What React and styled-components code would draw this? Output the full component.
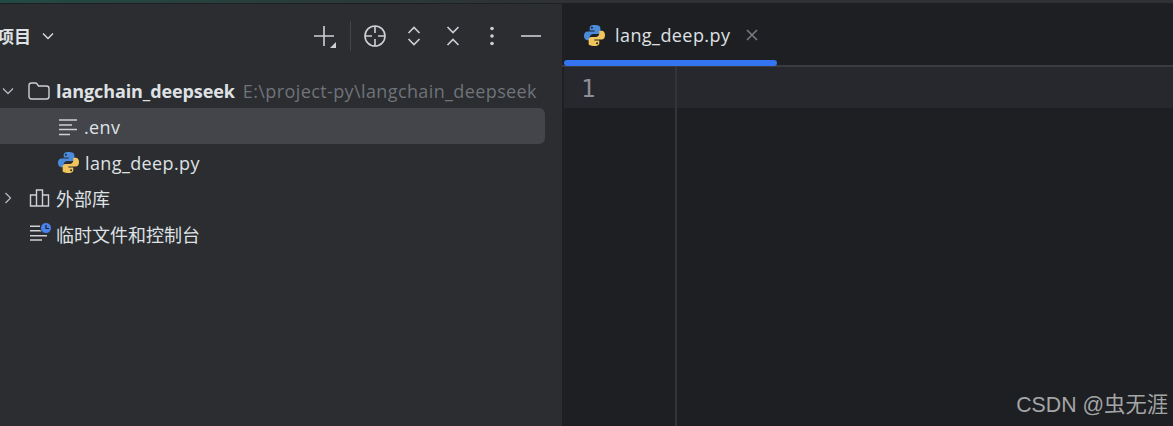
import React from 'react';
import styled, { createGlobalStyle } from 'styled-components';

const GlobalStyle = createGlobalStyle`
  html, body {
    margin: 0;
    padding: 0;
    background: #1e1f22;
  }
  body {
    font-family: 'Open Sans', 'Noto Sans CJK SC', sans-serif;
    overflow: hidden;
  }
`;

const Frame = styled.div`
  width: 1173px;
  height: 426px;
  display: flex;
  flex-direction: column;
  overflow: hidden;
`;

const TopStrip = styled.div`
  height: 3px;
  flex: none;
  background: linear-gradient(90deg, #234a44 0, #2a3a38 340px, #2f3134 560px);
  border-bottom: 1px solid #1e1f22;
`;

const Body = styled.div`
  flex: 1;
  display: flex;
  min-height: 0;
`;

const Sidebar = styled.aside`
  width: 562px;
  flex: none;
  background: #2b2d30;
  display: flex;
  flex-direction: column;
`;

const SideHeader = styled.header`
  height: 63px;
  flex: none;
  display: flex;
  align-items: center;
  padding: 0 12px 0 0;
`;

const Title = styled.div`
  display: flex;
  align-items: center;
  gap: 9px;
  margin-left: -3px;
  font-size: 17px;
  font-weight: 600;
  color: #dfe1e5;
`;

const Tools = styled.div`
  margin-left: auto;
  display: flex;
  align-items: center;
`;

const ToolButton = styled.button`
  width: ${p => p.$w || 39}px;
  height: 32px;
  padding: 0;
  background: none;
  border: 0;
  display: flex;
  align-items: center;
  justify-content: center;
  color: #ced0d6;
`;

const ToolDivider = styled.span`
  width: 1px;
  height: 30px;
  margin: 0 4px 0 8px;
  background: #43454a;
`;

const Tree = styled.div`
  display: flex;
  flex-direction: column;
  padding: 5px 17px 0 0;
`;

const Row = styled.div`
  height: 36px;
  box-sizing: border-box;
  display: flex;
  align-items: center;
  padding-left: ${p => p.$indent}px;
  padding-top: ${p => (p.$latin ? 1 : 0)}px;
  border-radius: ${p => (p.$selected ? '0 6px 6px 0' : '0')};
  background: ${p => (p.$selected ? '#43454a' : 'transparent')};
  font-size: 18px;
  letter-spacing: ${p => (p.$latin ? '0.39px' : '0')};
  color: #dfe1e5;
  white-space: nowrap;
`;

const Arrow = styled.span`
  width: 28px;
  flex: none;
  display: flex;
  align-items: center;
  color: #b4b8bf;
`;

const RowIcon = styled.span`
  width: ${p => p.$w || 27}px;
  flex: none;
  display: flex;
  align-items: center;
`;

const ProjectName = styled.span`
  font-weight: 700;
  letter-spacing: -0.09px;
`;

const ProjectPath = styled.span`
  margin-left: 8px;
  color: #6f737a;
`;

const Editor = styled.main`
  position: relative;
  flex: 1;
  min-width: 0;
  background: #1e1f22;
  display: flex;
  flex-direction: column;
`;

const TabBar = styled.div`
  height: 61px;
  flex: none;
  display: flex;
  align-items: flex-start;
  border-bottom: 2px solid #393b40;
`;

const Tab = styled.div`
  position: relative;
  width: 213px;
  height: 61px;
  margin-left: 2px;
  display: flex;
  align-items: center;
  padding: 1px 0 0 19px;
  box-sizing: border-box;
  font-size: 18px;
  letter-spacing: 0.43px;
  color: #dfe1e5;

  &::after {
    content: '';
    position: absolute;
    left: 0;
    right: 0;
    bottom: -1px;
    height: 6px;
    border-radius: 3px;
    background: #3574f0;
  }
`;

const TabLabel = styled.span`
  margin: 0 15px 0 9px;
`;

const CodeArea = styled.div`
  flex: 1;
  display: flex;
  min-height: 0;
`;

const Gutter = styled.div`
  width: 111px;
  flex: none;
  padding-left: 2px;
  border-right: 2px solid #313438;
`;

const LineNumber = styled.div`
  height: 41px;
  box-sizing: border-box;
  display: flex;
  align-items: center;
  padding: 3px 0 0 17px;
  background: #26282e;
  font-family: 'DejaVu Sans Mono', 'Liberation Mono', monospace;
  font-size: 24px;
  color: #8c8f96;
`;

const CurrentLine = styled.div`
  flex: 1;
  height: 41px;
  background: #26282e;
`;

const Watermark = styled.div`
  position: absolute;
  right: 5px;
  bottom: 8px;
  font-family: 'Liberation Sans', 'Noto Sans CJK SC', sans-serif;
  font-size: 21.3px;
  color: #a3a5a7;
`;

function PythonIcon({ size = 23 }) {
  return (
    <svg width={size} height={size} viewBox="0 0 24 24">
      <path
        fill="#4b8bdc"
        d="M11.900 1C7.600 1 7 2.800 7 4.100V6.800h5.200v1H4.600C2.600 7.800 1 9.600 1 12.300c0 2.800 1.500 4.600 3.400 4.600H7v-2.800c0-2 1.700-3.600 3.700-3.600h4.700c1.500 0 2.700-1.300 2.700-2.800V4.100C18.100 2.300 16.300 1 11.900 1zM9.300 2.800a1 1 0 1 1 0 2.100 1 1 0 0 1 0-2.100z"
      />
      <path
        fill="#f2c55c"
        d="M12.100 23c4.300 0 4.900-1.800 4.900-3.100v-2.700h-5.200v-1h7.600c2 0 3.600-1.800 3.600-4.500 0-2.800-1.500-4.600-3.400-4.600H17v2.800c0 2-1.700 3.600-3.700 3.600H8.600c-1.500 0-2.700 1.300-2.700 2.800v4.600C5.900 21.700 7.700 23 12.100 23zm2.600-1.800a1 1 0 1 1 0-2.100 1 1 0 0 1 0 2.100z"
      />
    </svg>
  );
}

function Chevron({ dir = 'down', size = 16 }) {
  const d = dir === 'down' ? 'M3 5.500l5 5 5-5' : 'M5.500 3l5 5-5 5';
  return (
    <svg width={size} height={size} viewBox="0 0 16 16" fill="none" stroke="currentColor" strokeWidth="1.300">
      <path d={d} />
    </svg>
  );
}

function Glyph({ w = 24, h = 24, children }) {
  return (
    <svg width={w} height={h} viewBox={`0 0 ${w} ${h}`} fill="none" stroke="#ced0d6" strokeWidth="1.600">
      {children}
    </svg>
  );
}

export default function App() {
  return (
    <Frame>
      <GlobalStyle />
      <TopStrip />
      <Body>
        <Sidebar>
          <SideHeader>
            <Title>
              项目
              <Chevron />
            </Title>
            <Tools>
              <ToolButton $w={36}>
                <Glyph>
                  <path d="M12 2v20M2 12h20" />
                  <path d="M24 18v6h-6z" fill="#ced0d6" stroke="none" />
                </Glyph>
              </ToolButton>
              <ToolDivider />
              <ToolButton>
                <Glyph>
                  <circle cx="12" cy="12" r="10" />
                  <path d="M12 2v7M12 15v7M2 12h7M15 12h7" />
                </Glyph>
              </ToolButton>
              <ToolButton>
                <Glyph>
                  <path d="M6.500 9l5.500-5.500L17.500 9M6.500 15l5.500 5.500 5.500-5.500" />
                </Glyph>
              </ToolButton>
              <ToolButton>
                <Glyph>
                  <path d="M6.500 3l5.500 5.500L17.500 3M6.500 21l5.500-5.500 5.500 5.500" />
                </Glyph>
              </ToolButton>
              <ToolButton>
                <Glyph>
                  <circle cx="12" cy="4.500" r="1.800" fill="#ced0d6" stroke="none" />
                  <circle cx="12" cy="12" r="1.800" fill="#ced0d6" stroke="none" />
                  <circle cx="12" cy="19.500" r="1.800" fill="#ced0d6" stroke="none" />
                </Glyph>
              </ToolButton>
              <ToolButton>
                <Glyph>
                  <path d="M2 12h20" />
                </Glyph>
              </ToolButton>
            </Tools>
          </SideHeader>
          <Tree>
            <Row $indent={0} $latin>
              <Arrow><Chevron /></Arrow>
              <RowIcon $w={28}>
                <svg width="22" height="20" viewBox="0 0 22 20" fill="none" stroke="#ced0d6" strokeWidth="1.400">
                  <path d="M1 4.500C1 3 2 2 3.500 2h3.800c.7 0 1.300.3 1.700.8L10.500 5H18.500C20 5 21 6 21 7.500v8c0 1.500-1 2.500-2.500 2.500h-15C2 18 1 17 1 15.500z" />
                </svg>
              </RowIcon>
              <ProjectName>langchain_deepseek</ProjectName>
              <ProjectPath>E:\project-py\langchain_deepseek</ProjectPath>
            </Row>
            <Row $indent={58} $selected $latin>
              <RowIcon $w={26}>
                <svg width="20" height="18" viewBox="0 0 20 18" fill="none" stroke="#ced0d6" strokeWidth="1.500">
                  <path d="M1 2h18M1 7h13M1 11.500h18M1 16.500h11" />
                </svg>
              </RowIcon>
              .env
            </Row>
            <Row $indent={57} $latin>
              <RowIcon $w={28}><PythonIcon /></RowIcon>
              lang_deep.py
            </Row>
            <Row $indent={0}>
              <Arrow><Chevron dir="right" /></Arrow>
              <RowIcon $w={28}>
                <svg width="22" height="20" viewBox="0 0 22 20" fill="none" stroke="#ced0d6" strokeWidth="1.400">
                  <path d="M2.500 7h6v11h-6zM8.500 2h6v16h-6zM14.500 7h6v11h-6z" />
                </svg>
              </RowIcon>
              外部库
            </Row>
            <Row $indent={29}>
              <RowIcon $w={27}>
                <svg width="23" height="24" viewBox="0 0 23 24" fill="none">
                  <path d="M1 4.300h10M1 8.700h14M1 13.700h17M1 18h12" stroke="#ced0d6" strokeWidth="1.500" />
                  <circle cx="17" cy="6" r="5.500" fill="#4b84ee" stroke="#2b2d30" strokeWidth="1" />
                  <path d="M17 3v3.500h3" stroke="#1e1f22" strokeWidth="1.200" />
                </svg>
              </RowIcon>
              临时文件和控制台
            </Row>
          </Tree>
        </Sidebar>
        <Editor>
          <TabBar>
            <Tab>
              <PythonIcon />
              <TabLabel>lang_deep.py</TabLabel>
              <svg width="14" height="14" viewBox="0 0 14 14" fill="none" stroke="#7a7e85" strokeWidth="1.500">
                <path d="M2 2l10 10M12 2L2 12" />
              </svg>
            </Tab>
          </TabBar>
          <CodeArea>
            <Gutter>
              <LineNumber>1</LineNumber>
            </Gutter>
            <CurrentLine />
          </CodeArea>
          <Watermark>CSDN @虫无涯</Watermark>
        </Editor>
      </Body>
    </Frame>
  );
}
